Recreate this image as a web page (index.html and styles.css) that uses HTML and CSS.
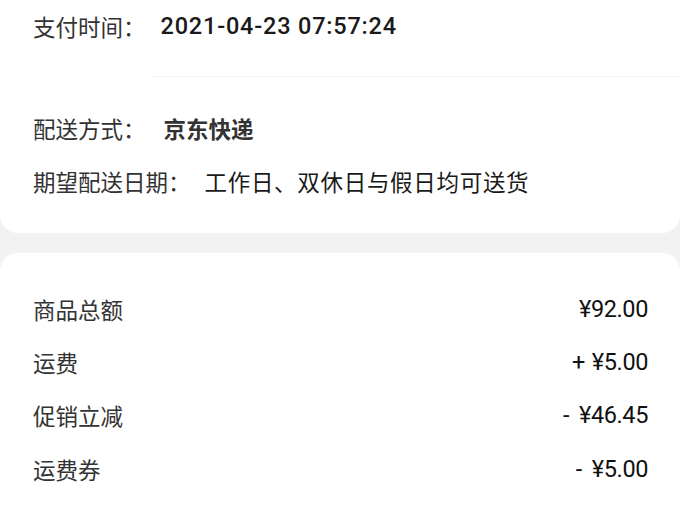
FILE: index.html
```html
<!DOCTYPE html>
<html lang="zh-CN">
<head>
<meta charset="utf-8">
<title>订单详情</title>
<link rel="stylesheet" href="styles.css">
</head>
<body>
<div class="page">
  <section class="card card-info">
    <div class="row row-pay">
      <span class="label">支付时间：</span>
      <span class="value value-time">2021-04-23 07:57:24</span>
    </div>
    <div class="divider"></div>
    <div class="row">
      <span class="label">配送方式：</span>
      <span class="value value-strong">京东快递</span>
    </div>
    <div class="row">
      <span class="label">期望配送日期：</span>
      <span class="value value-wide">工作日、双休日与假日均可送货</span>
    </div>
  </section>
  <section class="card card-amount">
    <div class="amount-row">
      <span class="label">商品总额</span>
      <span class="money">¥92.00</span>
    </div>
    <div class="amount-row">
      <span class="label">运费</span>
      <span class="money"><span class="sign">+</span>¥5.00</span>
    </div>
    <div class="amount-row">
      <span class="label">促销立减</span>
      <span class="money"><span class="sign sign-minus">-</span>¥46.45</span>
    </div>
    <div class="amount-row">
      <span class="label">运费券</span>
      <span class="money"><span class="sign sign-minus">-</span>¥5.00</span>
    </div>
  </section>
</div>
</body>
</html>
```
FILE: styles.css
```css
html, body {
  margin: 0;
  padding: 0;
}
body {
  background: #f2f2f2;
  font-family: "Noto Sans CJK SC", "Noto Sans", sans-serif;
  font-size: 22.5px;
  color: #333;
  width: 680px;
  height: 511px;
  overflow: hidden;
}
.page {
  display: flex;
  flex-direction: column;
  gap: 20px;
}
.card {
  background: #fff;
}
.card-info {
  border-radius: 0 0 18px 18px;
  padding: 0 0 26px 33px;
}
.row {
  display: flex;
  align-items: center;
  height: 53px;
}
.row-pay {
  height: 51px;
  margin-bottom: 25px;
}
.divider {
  height: 1px;
  background: #f4f4f4;
  margin-left: 118px;
  margin-bottom: 24px;
}
.label {
  color: #333;
  white-space: nowrap;
}
.value {
  margin-left: 18px;
  color: #1a1a1a;
  white-space: nowrap;
}
.value-time {
  margin-left: 15px;
  font-family: "Roboto", "Noto Sans", sans-serif;
  font-size: 23.5px;
  font-weight: 500;
  letter-spacing: 0.8px;
  color: #1a1a1a;
}
.value-strong {
  font-weight: 700;
  color: #333;
}
.value-wide {
  margin-left: 14px;
  letter-spacing: 0.7px;
}
.card-amount {
  border-radius: 18px 18px 0 0;
  padding: 29px 32px 40px 33px;
}
.amount-row {
  display: flex;
  justify-content: space-between;
  align-items: center;
  height: 53.4px;
}
.money {
  font-family: "Roboto", "Noto Sans", sans-serif;
  font-size: 23.5px;
  font-weight: 400;
  letter-spacing: -0.4px;
  color: #111;
}
.sign {
  margin-right: 7px;
}
.sign-minus {
  margin-right: 10px;
}
```
